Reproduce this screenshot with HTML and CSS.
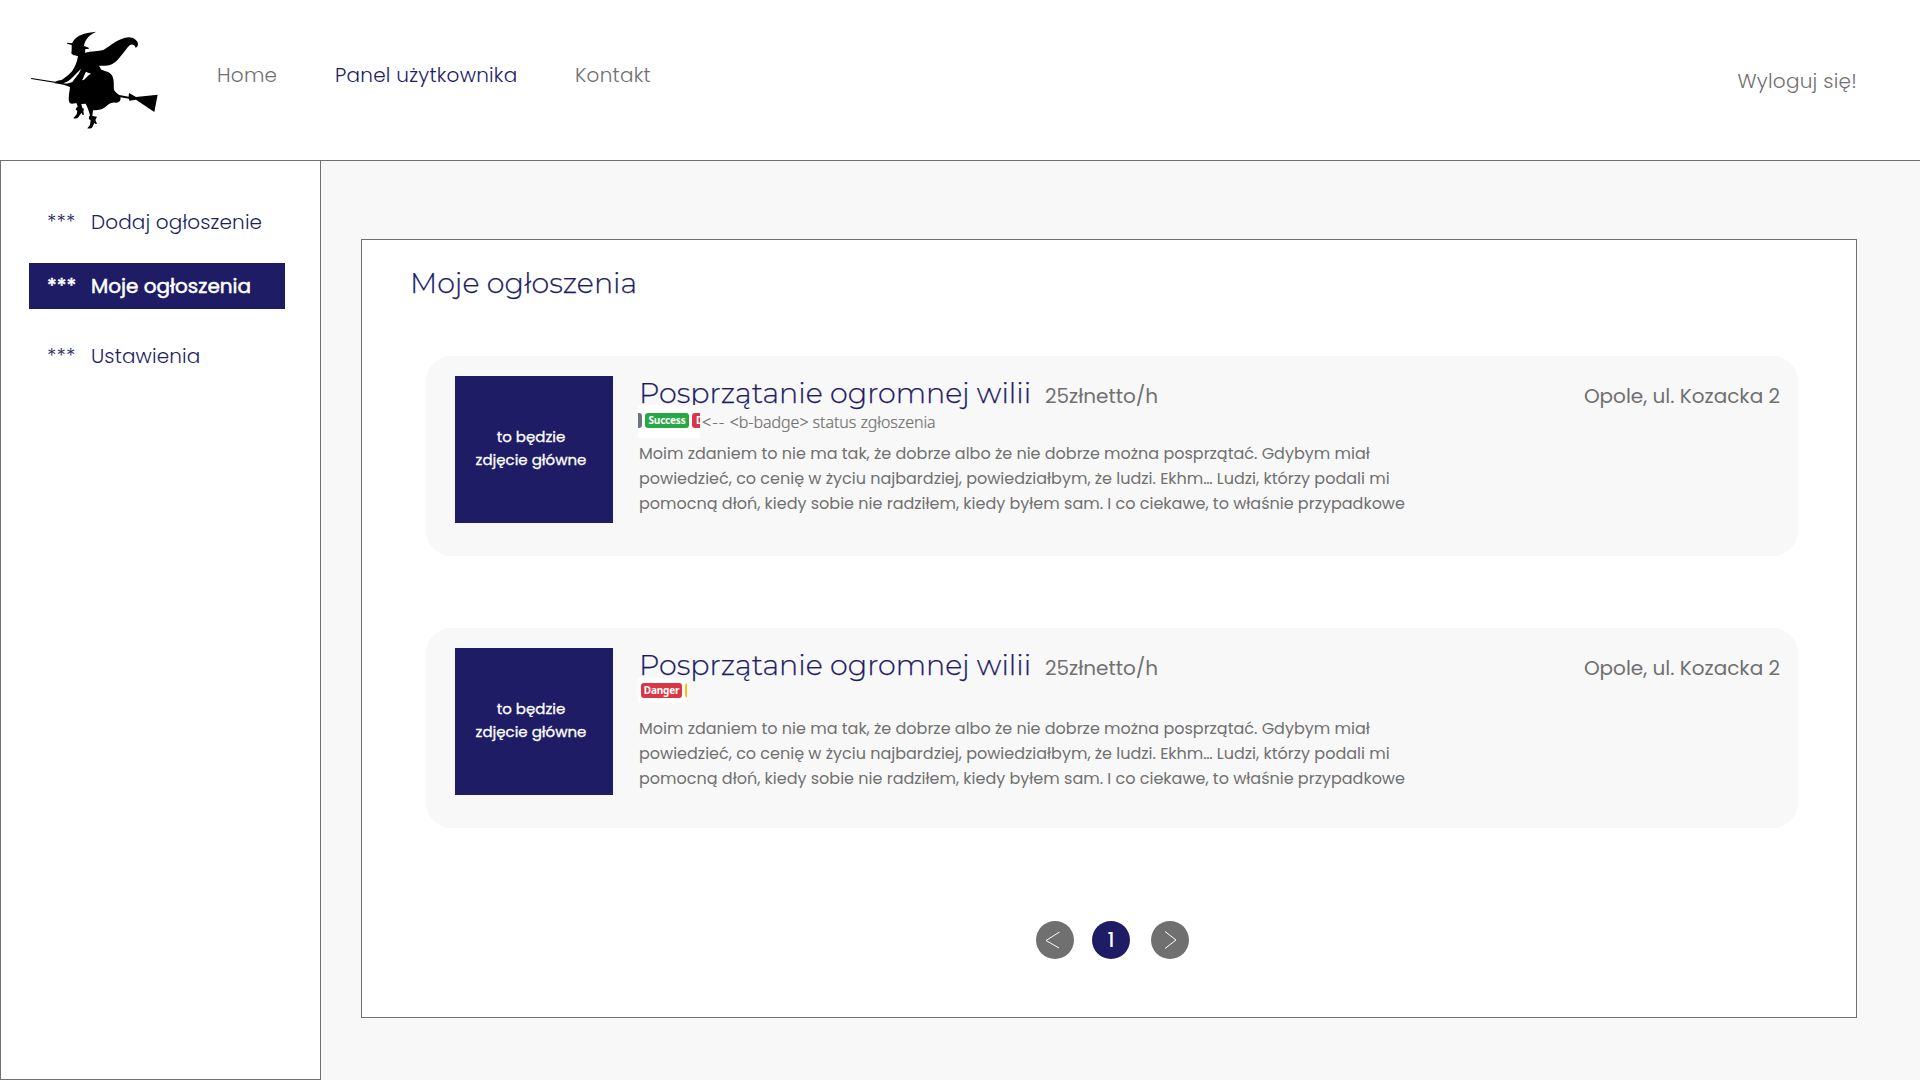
FILE: index.html
```
<!DOCTYPE html>
<html lang="pl">
<head>
<meta charset="utf-8">
<title>Moje ogłoszenia</title>
<link rel="stylesheet" href="styles.css">
</head>
<body>
<header class="header">
  <svg class="logo" viewBox="0 0 450 360" aria-label="Logo">
    <path d="M34 174L106 185C112 181 119 182 125 180C138 172 148 163 156 154C164 143 171 128 174 109C167 106 162 109 157 103C153 101 154 97 155 92L155 75L141 71L142 68L156 70C165 52 180 39 229 35C209 44 194 58 192 78L206 83L206 87L196 87L195 98C215 94 236 94 250 90C272 78 292 56 325 52C338 51 353 60 354 72C354 78 351 82 347 83C344 75 336 71 329 76C311 94 299 120 277 132C264 138 249 138 237 137L244 149C258 154 272 156 277 168C283 181 281 198 282 210C287 218 293 222 298 225L326 230L327 219L348 231L413 224L403 276L348 239L328 242L327 236L301 232C304 243 296 249 286 248C266 246 261 261 248 266C239 270 228 270 219 271L217 288L231 290L226 300L231 311L227 312L223 309L219 317C218 325 208 327 202 325L210 315L212 300L207 298L207 290L210 286C207 274 203 262 197 251L184 252L187 264L192 266L190 274L192 284L188 285L185 278L178 287C175 295 167 297 160 295L170 283L172 272L167 269L169 263L173 261L170 250C162 248 153 255 148 247C144 237 148 219 150 201L131 194L105 190L103 188L33 177Z"/>
    <path class="logo-gap" d="M130 190C151 183 166 163 183 146C178 162 165 173 158 185C150 189 140 192 130 190ZM186 181C191 172 194 162 198 155C205 159 209 159 213 161C201 167 197 179 186 181Z"/>
  </svg>
  <nav class="nav">
    <a class="nav-link nav-home">Home</a>
    <a class="nav-link nav-panel">Panel użytkownika</a>
    <a class="nav-link">Kontakt</a>
  </nav>
  <a class="logout">Wyloguj się!</a>
</header>
<div class="layout">
  <aside class="sidebar">
    <a class="side-item"><span class="stars">***</span><span>Dodaj ogłoszenie</span></a>
    <a class="side-item side-active"><span class="stars">***</span><span>Moje ogłoszenia</span></a>
    <a class="side-item"><span class="stars">***</span><span>Ustawienia</span></a>
  </aside>
  <main class="content">
    <section class="panel">
      <h1 class="heading">Moje ogłoszenia</h1>
      <article class="card">
        <div class="thumb"><span>to będzie</span><span>zdjęcie główne</span></div>
        <div class="body">
          <div class="title-row">
            <h2 class="title">Posprzątanie ogromnej wilii</h2>
            <span class="price">25złnetto/h</span>
            <span class="address">Opole, ul. Kozacka 2</span>
          </div>
          <div class="status">
            <div class="strip strip-cover">
              <span class="badge badge-grey"></span><span class="badge badge-success">Success</span><span class="badge badge-cut">D</span>
            </div>
            <span class="note"><span class="arrow">&lt;--</span> &lt;b-badge&gt; status zgłoszenia</span>
          </div>
          <p class="text">Moim zdaniem to nie ma tak, że dobrze albo że nie dobrze można posprzątać. Gdybym miał<br>powiedzieć, co cenię w życiu najbardziej, powiedziałbym, że ludzi. Ekhm… Ludzi, którzy podali mi<br>pomocną dłoń, kiedy sobie nie radziłem, kiedy byłem sam. I co ciekawe, to właśnie przypadkowe</p>
        </div>
      </article>
      <article class="card">
        <div class="thumb"><span>to będzie</span><span>zdjęcie główne</span></div>
        <div class="body">
          <div class="title-row">
            <h2 class="title">Posprzątanie ogromnej wilii</h2>
            <span class="price">25złnetto/h</span>
            <span class="address">Opole, ul. Kozacka 2</span>
          </div>
          <div class="strip strip-small">
            <span class="badge badge-danger">Danger</span><span class="badge badge-yellow"></span>
          </div>
          <p class="text text-low">Moim zdaniem to nie ma tak, że dobrze albo że nie dobrze można posprzątać. Gdybym miał<br>powiedzieć, co cenię w życiu najbardziej, powiedziałbym, że ludzi. Ekhm… Ludzi, którzy podali mi<br>pomocną dłoń, kiedy sobie nie radziłem, kiedy byłem sam. I co ciekawe, to właśnie przypadkowe</p>
        </div>
      </article>
      <div class="pager">
        <a class="page"><svg viewBox="0 0 38 38"><path d="M23.5 11L10 19.5L23 27"/></svg></a>
        <a class="page page-current">1</a>
        <a class="page page-next"><svg viewBox="0 0 38 38"><path d="M14 10.5L25 19L14 27.5"/></svg></a>
      </div>
    </section>
  </main>
</div>
</body>
</html>
```
FILE: styles.css
```
* { box-sizing: border-box; }
body {
  margin: 0;
  height: 1080px;
  display: flex;
  flex-direction: column;
  overflow: hidden;
  background: #fff;
  color: #707070;
  font: 400 20px/30px Poppins, Inter, "Open Sans", sans-serif;
  white-space: nowrap;
}
h1, h2, p { margin: 0; font-weight: 400; }

.header { display: flex; height: 160px; flex: none; padding: 20px 63px 0 20px; }
.logo { width: 150px; height: 120px; }
.logo-gap { fill: #fff; }
.nav { display: flex; padding-top: 40px; margin-left: 47px; font-weight: 300; letter-spacing: .23px; }
.nav-home { width: 118px; }
.nav-panel { width: 240px; color: #1d1c65; }
.logout { margin: 46px 0 0 auto; font-weight: 300; letter-spacing: .25px; }

.layout { flex: 1; display: flex; border-top: 1px solid #707070; }
.sidebar {
  width: 321px;
  padding: 38px 0 0 28px;
  border: 1px solid #707070;
  border-top: 0;
  color: #1d1c65;
}
.side-item {
  display: flex;
  width: 256px;
  height: 46px;
  padding-left: 18px;
  font-weight: 300;
  line-height: 46px;
  letter-spacing: .12px;
}
.stars { width: 44px; }
.side-active {
  margin: 18px 0 24px;
  background: #1d1c65;
  color: #fff;
  font-weight: 400;
  letter-spacing: 0;
  -webkit-text-stroke: .5px #fff;
}

.content { flex: 1; background: #f8f8f8; padding: 78px 63px 0 40px; }
.panel { height: 779px; border: 1px solid #707070; background: #fff; padding: 26px 58px 0 64px; }
.heading, .title {
  font-family: Montserrat, Poppins, sans-serif;
  font-weight: 300;
  font-size: 28.5px;
  color: #1d1c65;
  -webkit-text-stroke: .25px #1d1c65;
}
.heading { margin-left: -16px; line-height: 34px; }
.card {
  display: flex;
  height: 200px;
  margin-top: 56px;
  padding: 20px 18px 0 29px;
  border-radius: 25px;
  background: #f8f8f8;
}
.card + .card { margin-top: 72px; }
.thumb {
  width: 158px;
  height: 147px;
  flex: none;
  display: flex;
  flex-direction: column;
  align-items: center;
  padding: 49px 6px 0 0;
  background: #1d1c65;
  color: #fff;
  font-size: 15px;
  line-height: 23px;
  -webkit-text-stroke: .3px #fff;
}
.body { flex: 1; margin: 4px 0 0 25px; }
.title-row { display: flex; height: 25px; align-items: baseline; padding-left: 1px; line-height: 25px; }
.title { width: 406px; line-height: 25px; }
.address { margin-left: auto; }
.status { display: flex; height: 33px; }
.strip { display: flex; background: #fff; overflow: hidden; }
.strip-cover { position: relative; width: 62px; padding-top: 8px; }
.strip-small { width: 49px; height: 25px; margin-top: 1px; padding: 5px 0 0 3px; }
.badge {
  flex: none;
  height: 15px;
  border-radius: 3px;
  color: #fff;
  font: 700 10px/15px "Noto Sans", "Open Sans", sans-serif;
  letter-spacing: -.2px;
  text-align: center;
}
.badge-grey { width: 4px; margin-right: 3px; border-radius: 0 3px 3px 0; background: #6c757d; }
.badge-success { width: 44px; background: #28a745; }
.badge-cut { width: 43px; margin-left: 3px; padding-left: 4px; background: #dc3545; text-align: left; }
.badge-danger { width: 41px; background: #dc3545; }
.badge-yellow { width: 30px; margin-left: 3px; background: #ffc107; }
.note {
  padding-left: 2px;
  font: 300 16px/34px "Noto Sans", "Open Sans", sans-serif;
  letter-spacing: -.05px;
  -webkit-text-stroke: .2px #707070;
}
.arrow { letter-spacing: 1.4px; }
.text { margin: 3px 0 0 1px; font-size: 16px; line-height: 25px; }
.text-low { margin-top: 13px; }

.pager { display: flex; margin: 93px 0 0 610px; gap: 18px; }
.page { width: 38px; height: 38px; border-radius: 50%; background: #707070; }
.page svg { display: block; fill: none; stroke: #fff; stroke-width: 1; }
.page-current { background: #1d1c65; color: #fff; font-weight: 500; line-height: 38px; text-align: center; }
.page-next { margin-left: 3px; }
```
